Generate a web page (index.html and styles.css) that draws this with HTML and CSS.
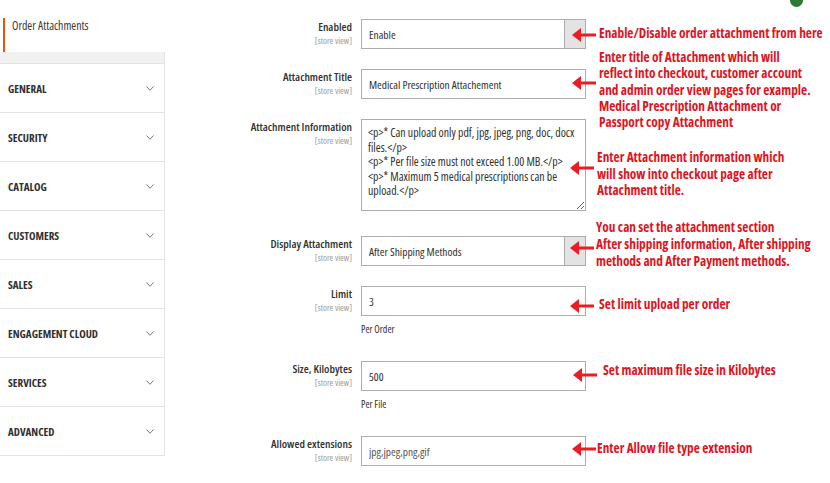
FILE: index.html
```html
<!DOCTYPE html>
<html>
<head>
    <meta charset="UTF-8">
    <title>Order Attachments - Configuration</title>
    <link rel="stylesheet" href="styles.css">
</head>
<body>
<div class="page">

    <!-- left config menu -->
    <div class="sidebar">
        <div class="tab-current">
            <span>Order Attachments</span>
        </div>
        <div class="tab-gap"></div>
        <div class="menu-item"><span>GENERAL</span><svg class="chev" viewBox="0 0 8 5"><polyline points="0.5,0.5 4,4.3 7.5,0.5"/></svg></div>
        <div class="menu-item"><span>SECURITY</span><svg class="chev" viewBox="0 0 8 5"><polyline points="0.5,0.5 4,4.3 7.5,0.5"/></svg></div>
        <div class="menu-item"><span>CATALOG</span><svg class="chev" viewBox="0 0 8 5"><polyline points="0.5,0.5 4,4.3 7.5,0.5"/></svg></div>
        <div class="menu-item"><span>CUSTOMERS</span><svg class="chev" viewBox="0 0 8 5"><polyline points="0.5,0.5 4,4.3 7.5,0.5"/></svg></div>
        <div class="menu-item"><span>SALES</span><svg class="chev" viewBox="0 0 8 5"><polyline points="0.5,0.5 4,4.3 7.5,0.5"/></svg></div>
        <div class="menu-item"><span>ENGAGEMENT CLOUD</span><svg class="chev" viewBox="0 0 8 5"><polyline points="0.5,0.5 4,4.3 7.5,0.5"/></svg></div>
        <div class="menu-item"><span>SERVICES</span><svg class="chev" viewBox="0 0 8 5"><polyline points="0.5,0.5 4,4.3 7.5,0.5"/></svg></div>
        <div class="menu-item"><span>ADVANCED</span><svg class="chev" viewBox="0 0 8 5"><polyline points="0.5,0.5 4,4.3 7.5,0.5"/></svg></div>
    </div>

    <!-- settings form -->
    <div class="form">
        <div class="row">
            <div class="label"><b>Enabled</b><i>[store view]</i></div>
            <div class="control">
                <div class="select"><span>Enable</span><em class="select-btn"></em></div>
            </div>
        </div>

        <div class="row">
            <div class="label"><b>Attachment Title</b><i>[store view]</i></div>
            <div class="control">
                <input class="input" type="text" value="Medical Prescription Attachement">
            </div>
        </div>

        <div class="row row-info">
            <div class="label"><b>Attachment Information</b><i>[store view]</i></div>
            <div class="control">
                <textarea class="textarea"><p>* Can upload only pdf, jpg, jpeg, png, doc, docx files.</p>
<p>* Per file size must not exceed 1.00 MB.</p>
<p>* Maximum 5 medical prescriptions can be upload.</p></textarea>
            </div>
        </div>

        <div class="row">
            <div class="label"><b>Display Attachment</b><i>[store view]</i></div>
            <div class="control">
                <div class="select"><span>After Shipping Methods</span><em class="select-btn"></em></div>
            </div>
        </div>

        <div class="row row-noted">
            <div class="label"><b>Limit</b><i>[store view]</i></div>
            <div class="control">
                <input class="input" type="text" value="3">
                <p class="note">Per Order</p>
            </div>
        </div>

        <div class="row row-noted">
            <div class="label"><b>Size, Kilobytes</b><i>[store view]</i></div>
            <div class="control">
                <input class="input" type="text" value="500">
                <p class="note">Per File</p>
            </div>
        </div>

        <div class="row">
            <div class="label"><b>Allowed extensions</b><i>[store view]</i></div>
            <div class="control">
                <input class="input input-ext" type="text" value="jpg,jpeg,png,gif">
            </div>
        </div>
    </div>

    <!-- red callouts drawn over the screenshot -->
    <div class="dot"></div>

    <svg class="arrow arrow-1" viewBox="0 0 24 14"><polygon points="0,7 9,0 9,14"/><rect x="8" y="5.5" width="16" height="3"/></svg>
    <svg class="arrow arrow-2" viewBox="0 0 24 14"><polygon points="0,7 9,0 9,14"/><rect x="8" y="5.5" width="16" height="3"/></svg>
    <svg class="arrow arrow-3" viewBox="0 0 24 14"><polygon points="0,7 9,0 9,14"/><rect x="8" y="5.5" width="16" height="3"/></svg>
    <svg class="arrow arrow-4" viewBox="0 0 24 14"><polygon points="0,7 9,0 9,14"/><rect x="8" y="5.5" width="16" height="3"/></svg>
    <svg class="arrow arrow-5" viewBox="0 0 24 14"><polygon points="0,7 9,0 9,14"/><rect x="8" y="5.5" width="16" height="3"/></svg>
    <svg class="arrow arrow-6" viewBox="0 0 24 14"><polygon points="0,7 9,0 9,14"/><rect x="8" y="5.5" width="16" height="3"/></svg>
    <svg class="arrow arrow-7" viewBox="0 0 24 14"><polygon points="0,7 9,0 9,14"/><rect x="8" y="5.5" width="16" height="3"/></svg>

    <div class="callout callout-1">Enable/Disable order attachment from here</div>
    <div class="callout callout-2">Enter title of Attachment which will<br>reflect into checkout, customer account<br>and admin order view pages for example.<br>Medical Prescription Attachment or<br>Passport copy Attachment</div>
    <div class="callout callout-3">Enter Attachment information which<br>will show into checkout page after<br>Attachment title.</div>
    <div class="callout callout-4">You can set the attachment section<br>After shipping information, After shipping<br>methods and After Payment methods.</div>
    <div class="callout callout-5">Set limit upload per order</div>
    <div class="callout callout-6">Set maximum file size in Kilobytes</div>
    <div class="callout callout-7">Enter Allow file type extension</div>

</div>
</body>
</html>
```
FILE: styles.css
```css
body {
    margin: 0;
    background: #fff;
    font-family: "Open Sans", "Liberation Sans", sans-serif;
    font-stretch: 75%;
    color: #303030;
}

.page {
    position: relative;
    width: 830px;
    height: 483px;
    overflow: hidden;
    display: flex;
}

/* sidebar */
.sidebar {
    width: 165px;
    flex: none;
}

.tab-current {
    margin: 18px 0 0 3px;
    height: 34px;
    border-left: 2px solid #eb5202;
    padding-left: 7px;
    font-size: 11.8px;
    line-height: 14px;
    color: #41362f;
}

.tab-gap {
    height: 11px;
    background: #f1f1f1;
    border-bottom: 1px solid #e3e3e3;
    border-right: 1px solid #e3e3e3;
}

.menu-item {
    height: 48px;
    border-bottom: 1px solid #e3e3e3;
    border-right: 1px solid #e3e3e3;
    display: flex;
    align-items: center;
    justify-content: space-between;
    padding: 0 10px 0 8px;
    font-size: 11px;
    font-weight: 700;
    color: #303030;
}

.chev {
    width: 8px;
    height: 5px;
    fill: none;
    stroke: #777;
    stroke-width: 1;
}

/* form */
.form {
    padding-top: 19px;
    flex: none;
}

.row {
    display: flex;
    gap: 9px;
    margin-bottom: 20px;
}

.row-info {
    margin-bottom: 25px;
}

.row-noted {
    margin-bottom: 25px;
}

.label {
    width: 187px;
    text-align: right;
    padding-top: 1px;
}

.label b {
    display: block;
    font-weight: 600;
    font-size: 11.5px;
    line-height: 14px;
}

.label i {
    display: block;
    margin-top: 2px;
    font-style: normal;
    font-size: 9px;
    line-height: 10px;
    color: #9a9a9a;
}

.control {
    width: 225px;
}

.select,
.input {
    box-sizing: border-box;
    width: 225px;
    height: 30px;
    border: 1px solid #adadad;
    background: #fff;
    font-family: inherit;
    font-stretch: 75%;
    font-size: 11.4px;
    color: #303030;
    padding: 0 0 0 7px;
    margin: 0;
    display: flex;
    align-items: center;
    outline: none;
}

.select {
    justify-content: space-between;
    padding: 0;
}

.select span {
    padding-left: 7px;
}

.select-btn {
    width: 20px;
    height: 28px;
    background: #e3e3e3;
    border-left: 1px solid #adadad;
}

.input-ext {
    color: #555;
}

.textarea {
    box-sizing: border-box;
    width: 225px;
    height: 92px;
    border: 1px solid #adadad;
    padding: 5px 6px;
    margin: 0;
    font-family: inherit;
    font-stretch: 75%;
    font-size: 11.8px;
    line-height: 14.6px;
    color: #303030;
    display: block;
    outline: none;
}

.note {
    margin: 7px 0 0;
    font-size: 10px;
    line-height: 13px;
}

/* callouts */
.dot {
    position: absolute;
    left: 790px;
    top: -6px;
    width: 13px;
    height: 13px;
    border-radius: 50%;
    background: #2e7a31;
}

.arrow {
    position: absolute;
    width: 24px;
    height: 14px;
    fill: #ec1c24;
}

.arrow-1 { left: 572px; top: 28px; }
.arrow-2 { left: 572px; top: 76px; }
.arrow-3 { left: 570px; top: 161px; }
.arrow-4 { left: 570px; top: 241px; }
.arrow-5 { left: 570px; top: 299px; }
.arrow-6 { left: 573px; top: 368px; }
.arrow-7 { left: 572px; top: 442px; }

.callout {
    position: absolute;
    font-family: "Open Sans", "Liberation Sans", sans-serif;
    font-stretch: 75%;
    font-weight: 700;
    font-size: 13.3px;
    line-height: 16.5px;
    color: #e0141e;
    white-space: nowrap;
}

.callout-1 { left: 599px; top: 25px; }
.callout-2 { left: 599px; top: 49px; line-height: 16.3px; }
.callout-3 { left: 597px; top: 149px; }
.callout-4 { left: 596px; top: 219px; line-height: 17px; }
.callout-5 { left: 599px; top: 296px; }
.callout-6 { left: 603px; top: 362px; }
.callout-7 { left: 597px; top: 440px; }
```
